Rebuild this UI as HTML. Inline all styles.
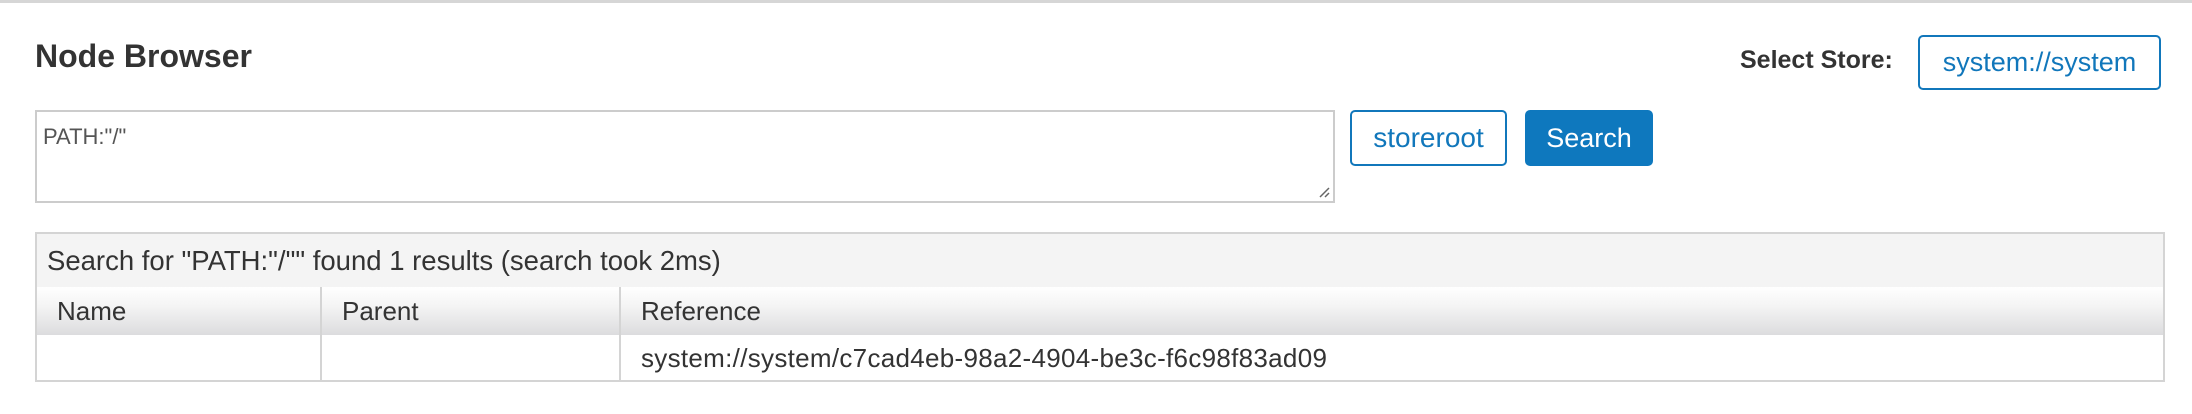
<!DOCTYPE html>
<html><head><style>
body{margin:0;width:2192px;height:414px;background:#fff;font-family:"Liberation Sans",sans-serif;position:relative;overflow:hidden;color:#333}
.top{position:absolute;left:0;top:0;width:2192px;height:3px;background:#d6d6d6}
.t{position:absolute;left:35px;top:38px;font-size:32px;font-weight:bold;color:#333}
.sl{position:absolute;left:1740px;top:46px;font-size:25px;font-weight:bold;color:#333}
.btn{position:absolute;box-sizing:border-box;border:2px solid #1177bb;border-radius:5px;color:#1177bb;font-size:27px;display:flex;align-items:center;justify-content:center}
.ta{position:absolute;left:35px;top:110px;width:1300px;height:93px;box-sizing:border-box;border:2px solid #ccc;font-size:22px;color:#555;padding:12px 6px}
.panel{position:absolute;left:35px;top:232px;width:2130px;height:150px;box-sizing:border-box;border:2px solid #d4d4d4;background:#f4f4f4}
.sum{position:absolute;left:10px;top:11px;font-size:27.5px;color:#333}
.hd{position:absolute;left:0;top:53px;width:2126px;height:48px;background:linear-gradient(#fff 0%,#f4f4f4 40%,#dcdcde 100%)}
.row{position:absolute;left:0;top:101px;width:2126px;height:45px;background:#fff}
.c{position:absolute;top:0;height:100%;border-left:2px solid #d4d4d4;box-sizing:border-box;font-size:26px;padding:9px 0 0 20px}
</style></head><body>
<div class="top"></div>
<div class="t">Node Browser</div>
<div class="sl">Select Store:</div>
<div class="btn" style="left:1918px;top:35px;width:243px;height:55px">system://system</div>
<div class="ta">PATH:"/"
<svg style="position:absolute;right:2px;bottom:2px" width="14" height="14"><path d="M12 3L3 12M12 8L8 12" stroke="#666" stroke-width="1.5"/></svg></div>
<div class="btn" style="left:1350px;top:110px;width:157px;height:56px;font-size:28px">storeroot</div>
<div class="btn" style="left:1525px;top:110px;width:128px;height:56px;background:#0e78be;color:#fff;border-color:#0e78be;font-size:27px">Search</div>
<div class="panel">
<div class="sum">Search for "PATH:"/"" found 1 results (search took 2ms)</div>
<div class="hd">
<div class="c" style="left:0;width:284px;border-left:0;padding-left:20px">Name</div>
<div class="c" style="left:283px;width:300px">Parent</div>
<div class="c" style="left:582px;width:1544px">Reference</div>
</div>
<div class="row">
<div class="c" style="left:283px;width:300px"></div>
<div class="c" style="left:582px;width:1544px;padding-top:8px;letter-spacing:0.3px">system://system/c7cad4eb-98a2-4904-be3c-f6c98f83ad09</div>
</div>
</div>
</body></html>
